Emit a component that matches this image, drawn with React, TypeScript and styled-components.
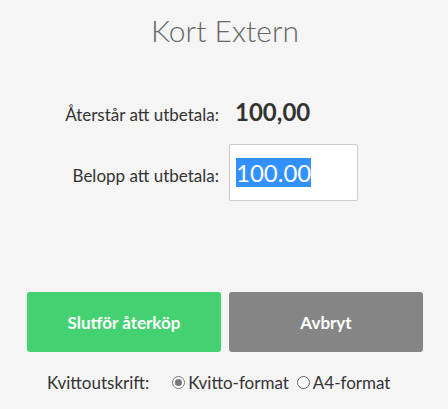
import * as React from 'react';
import styled, { createGlobalStyle } from 'styled-components';

const GlobalStyle = createGlobalStyle`
  html, body {
    margin: 0;
    padding: 0;
    background: #f5f5f5;
  }
  body {
    font-family: Lato, "Liberation Sans", sans-serif;
    color: #333;
  }
`;

const Page = styled.div`
  width: 448px;
  height: 409px;
  box-sizing: border-box;
  padding: 9px 25px 0 27px;
  display: flex;
  flex-direction: column;
`;

const Title = styled.h1`
  margin: 0;
  font-size: 30px;
  font-weight: 300;
  color: #666;
  text-align: center;
  line-height: 42px;
`;

const Form = styled.div`
  display: grid;
  grid-template-columns: 192px auto;
  column-gap: 10px;
  row-gap: 18px;
  align-items: baseline;
  margin-top: 46px;
`;

const Label = styled.span`
  font-size: 17px;
  text-align: right;
  color: #333;
`;

const Amount = styled.span`
  font-size: 24px;
  font-weight: 700;
  padding-left: 6px;
  color: #333;
`;

const AmountInput = styled.input`
  width: 129px;
  height: 57px;
  box-sizing: border-box;
  border: 1px solid #ccc;
  border-radius: 2px;
  background: #fff;
  padding: 0 6px;
  font-family: inherit;
  font-size: 24px;
  color: #333;
  outline: none;

  &::selection {
    background: #3390ff;
    color: #fff;
  }
`;

const Actions = styled.div`
  display: grid;
  grid-template-columns: 1fr 1fr;
  gap: 8px;
  margin-top: 91px;
`;

const Button = styled.button<{ $variant: 'confirm' | 'cancel' }>`
  height: 60px;
  border: none;
  border-radius: 3px;
  background: ${({ $variant }) => ($variant === 'confirm' ? '#44d172' : '#858585')};
  color: #fff;
  font-family: inherit;
  font-size: 17px;
  font-weight: 700;
  cursor: pointer;
`;

const PrintRow = styled.div`
  display: flex;
  align-items: center;
  margin-top: 20px;
  padding-left: 20px;
  font-size: 17px;
  color: #333;
`;

const PrintLabel = styled.span`
  margin-right: 23px;
`;

const RadioOption = styled.label`
  display: flex;
  align-items: center;
  margin-right: 8px;
`;

const Radio = styled.span<{ $checked?: boolean }>`
  width: 11px;
  height: 11px;
  border-radius: 50%;
  border: 1px solid ${({ $checked }) => ($checked ? '#777' : '#666')};
  background: #fff;
  margin-right: 3px;
  display: flex;
  align-items: center;
  justify-content: center;

  &::after {
    content: '';
    display: ${({ $checked }) => ($checked ? 'block' : 'none')};
    width: 7px;
    height: 7px;
    border-radius: 50%;
    background: #777;
  }
`;

const App = () => {
  const inputRef = React.useRef<HTMLInputElement>(null);

  React.useEffect(() => {
    inputRef.current?.focus();
    inputRef.current?.select();
  }, []);

  return (
    <>
      <GlobalStyle />
      <Page>
        <Title>Kort Extern</Title>
        <Form>
          <Label>Återstår att utbetala:</Label>
          <Amount>100,00</Amount>
          <Label>Belopp att utbetala:</Label>
          <AmountInput ref={inputRef} defaultValue="100.00" />
        </Form>
        <Actions>
          <Button $variant="confirm">Slutför återköp</Button>
          <Button $variant="cancel">Avbryt</Button>
        </Actions>
        <PrintRow>
          <PrintLabel>Kvittoutskrift:</PrintLabel>
          <RadioOption>
            <Radio $checked />
            Kvitto-format
          </RadioOption>
          <RadioOption>
            <Radio />
            A4-format
          </RadioOption>
        </PrintRow>
      </Page>
    </>
  );
};

export default App;
